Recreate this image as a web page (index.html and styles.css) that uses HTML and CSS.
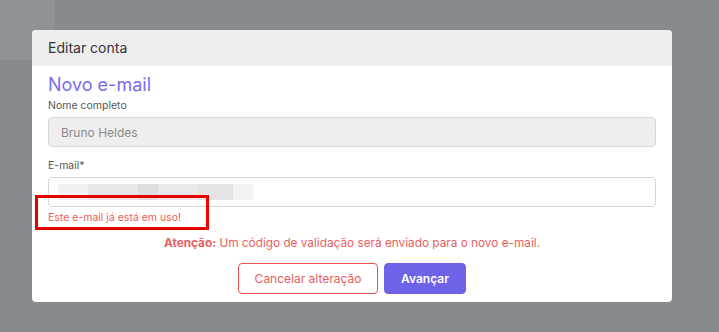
FILE: index.html
```html
<!DOCTYPE html>
<html lang="pt-BR">
<head>
    <meta charset="UTF-8">
    <meta name="viewport" content="width=device-width, initial-scale=1.0">
    <title>Editar conta</title>
    <link rel="stylesheet" href="styles.css">
</head>
<body>

<div class="backdrop">
    <div class="side-panel"></div>

    <div class="modal">
        <div class="modal-header">Editar conta</div>
        <div class="modal-body">
            <h2 class="modal-title">Novo e-mail</h2>

            <div class="field">
                <label class="field-label">Nome completo</label>
                <div class="field-input disabled">Bruno Heldes</div>
            </div>

            <div class="field">
                <label class="field-label">E-mail*</label>
                <div class="field-input">
                    <div class="blurred">
                        <span></span><span></span><span></span><span></span><span></span><span></span>
                    </div>
                </div>
                <p class="field-error">Este e-mail já está em uso!</p>
                <div class="highlight"></div>
            </div>

            <p class="notice"><strong>Atenção:</strong> Um código de validação será enviado para o novo e-mail.</p>

            <div class="actions">
                <button class="btn btn-outline">Cancelar alteração</button>
                <button class="btn btn-primary">Avançar</button>
            </div>
        </div>
    </div>
</div>

</body>
</html>
```

FILE: styles.css
```css
body {
    margin: 0;
    font-family: Inter, "Open Sans", sans-serif;
    background: #888b8e;
}
.backdrop {
    position: relative;
    width: 719px;
    height: 332px;
    padding-top: 30px;
    box-sizing: border-box;
}
.side-panel {
    position: absolute;
    left: 0;
    top: 0;
    width: 55px;
    height: 60px;
    background: #909396;
}
.modal {
    position: relative;
    width: 640px;
    margin-left: 32px;
    background: #fff;
    border-radius: 4px;
    overflow: hidden;
}
.modal-header {
    height: 36px;
    line-height: 36px;
    padding: 0 16px;
    background: #eeeeee;
    font-size: 14px;
    color: #333;
}
.modal-body {
    padding: 8px 16px 8px;
}
.modal-title {
    margin: 0 0 4px;
    font-size: 18px;
    font-weight: 400;
    color: #7a6cf0;
}
.field {
    position: relative;
    margin-bottom: 12px;
}
.field-label {
    display: block;
    font-size: 10.5px;
    color: #555;
    margin-bottom: 5px;
}
.field-input {
    height: 30px;
    box-sizing: border-box;
    border: 1px solid #d6d6dc;
    border-radius: 4px;
    padding: 0 12px;
    display: flex;
    align-items: center;
    font-size: 12px;
    color: #8a8a8a;
}
.field-input.disabled {
    background: #eeeeee;
}
.blurred {
    display: flex;
    height: 16px;
    margin-left: -3px;
}
.blurred span {
    height: 16px;
    background: #ececec;
}
.blurred span:nth-child(1) { width: 30px; background: #f1f1f1; }
.blurred span:nth-child(2) { width: 50px; background: #e8e8e8; }
.blurred span:nth-child(3) { width: 20px; background: #dedede; }
.blurred span:nth-child(4) { width: 40px; background: #e9e9e9; }
.blurred span:nth-child(5) { width: 35px; background: #e4e4e4; }
.blurred span:nth-child(6) { width: 20px; background: #f3f3f3; }
.field-error {
    margin: 4px 0 0;
    font-size: 10.5px;
    color: #ef5a5a;
}
.highlight {
    position: absolute;
    left: -13px;
    top: 36px;
    width: 168px;
    height: 29px;
    border: 3px solid #e60000;
}
.notice {
    margin: 12px 0 13px;
    text-align: center;
    font-size: 11.8px;
    color: #e86060;
}
.notice strong {
    font-weight: 700;
}
.actions {
    display: flex;
    justify-content: center;
    gap: 6px;
}
.btn {
    height: 31px;
    border-radius: 4px;
    font-family: inherit;
    font-size: 12px;
    padding: 0;
    white-space: nowrap;
}
.btn-outline {
    width: 140px;
    background: #fff;
    border: 1px solid #e85454;
    color: #e85c5c;
}
.btn-primary {
    width: 82px;
    background: #6e63e8;
    border: 1px solid #6e63e8;
    color: #fff;
    font-weight: 600;
}
```
